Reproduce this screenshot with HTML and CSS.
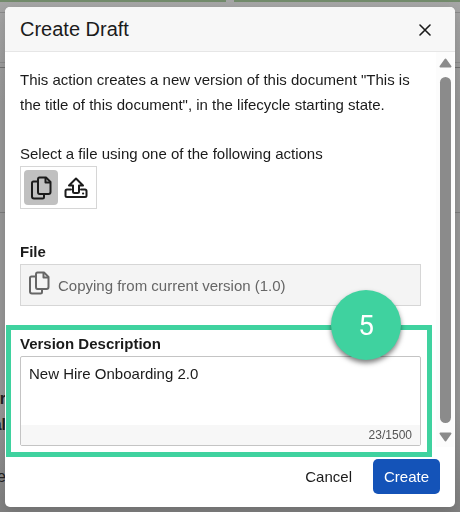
FILE: index.html
```html
<!DOCTYPE html>
<html lang="en">
<head>
<meta charset="UTF-8">
<meta name="viewport" content="width=device-width, initial-scale=1.0">
<title>Create Draft</title>
<link rel="stylesheet" href="styles.css">
</head>
<body>

<svg class="sprite" aria-hidden="true">
  <symbol id="icon-copy" viewBox="0 0 21 24">
    <path d="M6 5.500H2.500Q1 5.500 1 7V20.500Q1 22.500 3 22.500H11.500Q13 22.500 13 21V18.500"/>
    <path d="M8.500 1.500H15L19.500 6V16Q19.500 18 17.500 18H8.500Q7 18 7 16V3.500Q7 1.500 8.500 1.500Z"/>
    <path d="M14.500 2V6.500H19"/>
  </symbol>
  <symbol id="icon-upload" viewBox="0 0 24 22">
    <path d="M9 14.500V8.500H5L12 1.500L19 8.500H15V14.500Q15 16 13.500 16H10.500Q9 16 9 14.500Z"/>
    <path d="M7 12.500H3Q1.500 12.500 1.500 14V18.500Q1.500 20 3 20H21Q22.500 20 22.500 18.500V14Q22.500 12.500 21 12.500H17"/>
    <path d="M19 16.500H19.200"/>
  </symbol>
</svg>

<!-- page behind the dialog -->
<div class="page" aria-hidden="true">
  <div class="page-bar"><span></span><span></span></div>
  <div class="page-row page-row-top"></div>
  <div class="page-row page-row-head"></div>
  <div class="page-row page-row-title"></div>
  <div class="page-row page-row-tabs"></div>
  <div class="page-text">
    <p>r</p>
    <p>al</p>
    <p class="page-text-last">e</p>
  </div>
</div>

<form class="dialog" role="dialog" aria-labelledby="dialog-title">
  <header class="dialog-header">
    <h1 id="dialog-title">Create Draft</h1>
    <button type="button" class="close" aria-label="Close">
      <svg viewBox="0 0 12 12"><path d="M1 1L11 11M11 1L1 11"/></svg>
    </button>
  </header>

  <div class="dialog-main">
    <div class="dialog-body">
      <p class="intro">This action creates a new version of this document "This is the title of this document", in the lifecycle starting state.</p>

      <div class="field">
        <span class="label" id="source-label">Select a file using one of the following actions</span>
        <div class="toolbar" role="group" aria-labelledby="source-label">
          <button type="button" class="tool active" aria-label="Copy current version">
            <svg class="icon-copy"><use href="#icon-copy"/></svg>
          </button>
          <button type="button" class="tool" aria-label="Upload file">
            <svg class="icon-upload"><use href="#icon-upload"/></svg>
          </button>
        </div>
      </div>

      <div class="field">
        <label class="label bold" for="file">File</label>
        <div class="file-box">
          <svg class="icon-copy"><use href="#icon-copy"/></svg>
          <input type="text" id="file" value="Copying from current version (1.0)" readonly>
        </div>
      </div>

      <div class="field highlighted">
        <label class="label bold" for="description">Version Description</label>
        <div class="text-box">
          <textarea id="description" maxlength="1500">New Hire Onboarding 2.0</textarea>
          <div class="counter">23/1500</div>
        </div>
        <div class="step">5</div>
      </div>
    </div>

    <div class="scrollbar" aria-hidden="true">
      <svg class="arrow" viewBox="0 0 13 10"><path d="M6.500 1.500L11.500 8.500H1.500Z"/></svg>
      <div class="thumb"></div>
      <svg class="arrow" viewBox="0 0 13 10"><path d="M6.500 8.500L11.500 1.500H1.500Z"/></svg>
    </div>
  </div>

  <footer class="dialog-footer">
    <button type="button" class="btn">Cancel</button>
    <button type="submit" class="btn btn-primary">Create</button>
  </footer>
</form>

</body>
</html>
```

FILE: styles.css
```css
* {
  box-sizing: border-box;
}

body {
  margin: 0;
  padding: 7px 5px 5px;
  min-height: 100vh;
  font-family: "Liberation Sans", Arial, sans-serif;
  font-size: 15px;
  line-height: 24px;
  color: #1b1b1b;
  background: #979797;
}

h1, p {
  margin: 0;
}

button, input, textarea {
  margin: 0;
  padding: 0;
  border: 0;
  font: inherit;
  color: inherit;
  background: none;
}

svg {
  display: block;
  fill: none;
  stroke: currentColor;
  stroke-width: 2;
  stroke-linejoin: round;
  stroke-linecap: round;
}

.sprite {
  position: absolute;
  width: 0;
  height: 0;
}

/* page behind the dialog */
.page {
  position: fixed;
  inset: 0;
  overflow: hidden;
  background: linear-gradient(#a6a6a6, #979797 20%, #979797 80%, #808080);
}

.page-bar {
  display: flex;
  gap: 8px;
  height: 2px;
}

.page-bar span {
  flex: 1;
  background: #738b6c;
}

.page-row {
  border-bottom: 1px solid #8b8b8b;
}

.page-row-top {
  height: 11px;
}

.page-row-head {
  height: 50px;
}

.page-row-title {
  height: 5px;
  border-bottom-color: #707070;
}

.page-row-tabs {
  height: 145px;
  border-bottom-color: #7c7c7c;
}

.page-text {
  padding-top: 173px;
  font-size: 16px;
  line-height: 26px;
  font-weight: bold;
  color: #222;
}

.page-text p {
  width: 6px;
  display: flex;
  justify-content: flex-end;
}

.page-text .page-text-last {
  padding-top: 26px;
  font-weight: normal;
}

/* dialog */
.dialog {
  position: relative;
  background: #fff;
  border-radius: 5px;
  box-shadow: 0 4px 12px rgba(0, 0, 0, 0.15);
}

.dialog-header {
  display: flex;
  align-items: center;
  justify-content: space-between;
  height: 45px;
  padding: 0 20px 0 15px;
  background: #f7f7f7;
  border-bottom: 1px solid #e6e6e6;
  border-radius: 5px 5px 0 0;
}

.dialog-header h1 {
  font-size: 20px;
  font-weight: normal;
}

.close {
  padding: 5px 4px 3px;
}

.close svg {
  width: 12px;
  height: 12px;
  stroke-width: 1.6;
}

.dialog-main {
  display: flex;
}

.dialog-body {
  flex: 1;
  display: flex;
  flex-direction: column;
  padding: 15px 15px 1px;
}

.intro {
  margin-bottom: 25px;
  line-height: 25px;
}

.label {
  display: block;
}

.bold {
  font-weight: bold;
}

.toolbar {
  display: inline-flex;
  gap: 1px;
  padding: 3px;
  border: 1px solid #d6d6d6;
  margin-bottom: 31px;
  vertical-align: top;
}

.tool {
  display: flex;
  align-items: center;
  justify-content: center;
  width: 34px;
  height: 35px;
  border-radius: 4px;
}

.tool.active {
  background: #c0c0c0;
}

.icon-copy {
  width: 21px;
  height: 24px;
}

.icon-upload {
  width: 24px;
  height: 22px;
}

.file-box {
  display: flex;
  gap: 8px;
  height: 42px;
  margin-bottom: 26px;
  padding: 6px 8px;
  color: #666;
  background: #f4f4f4;
  border: 1px solid #d6d6d6;
}

.file-box input {
  flex: 1;
  min-width: 0;
  height: 28px;
}

.text-box {
  border: 1px solid #c4c4c4;
  border-radius: 2px;
}

.text-box textarea {
  display: block;
  width: 100%;
  height: 68px;
  padding: 5px 8px;
  resize: none;
}

.counter {
  padding: 0 8px;
  font-size: 12px;
  line-height: 20px;
  text-align: right;
  color: #555;
  background: #f7f7f7;
}

/* tutorial highlight around the field */
.highlighted {
  position: relative;
}

.highlighted::after {
  content: "";
  position: absolute;
  inset: -7px -11px -11px -14px;
  border: 5px solid #3fd29f;
  pointer-events: none;
}

.step {
  position: absolute;
  z-index: 1;
  top: -42px;
  right: 20px;
  width: 70px;
  height: 70px;
  border-radius: 50%;
  font-family: Roboto, sans-serif;
  font-size: 28px;
  line-height: 72px;
  text-align: center;
  color: #fff;
  background: #3fd29f;
  box-shadow: 0 3px 5px rgba(0, 0, 0, 0.5);
}

.scrollbar {
  display: flex;
  flex-direction: column;
  align-items: center;
  gap: 9px;
  width: 18px;
  margin-right: 1px;
  padding: 6px 0 5px;
  background: #fcfcfc;
}

.thumb {
  flex: 1;
  width: 11px;
  border-radius: 6px;
  background: #8b8b8b;
}

.arrow {
  width: 13px;
  height: 10px;
  color: #8b8b8b;
  fill: currentColor;
}

.dialog-footer {
  display: flex;
  justify-content: flex-end;
  gap: 10px;
  padding: 12px 15px 13px;
}

.btn {
  height: 35px;
  padding: 0 11px;
  border-radius: 5px;
}

.btn-primary {
  color: #fff;
  background: #1453b8;
}
```
